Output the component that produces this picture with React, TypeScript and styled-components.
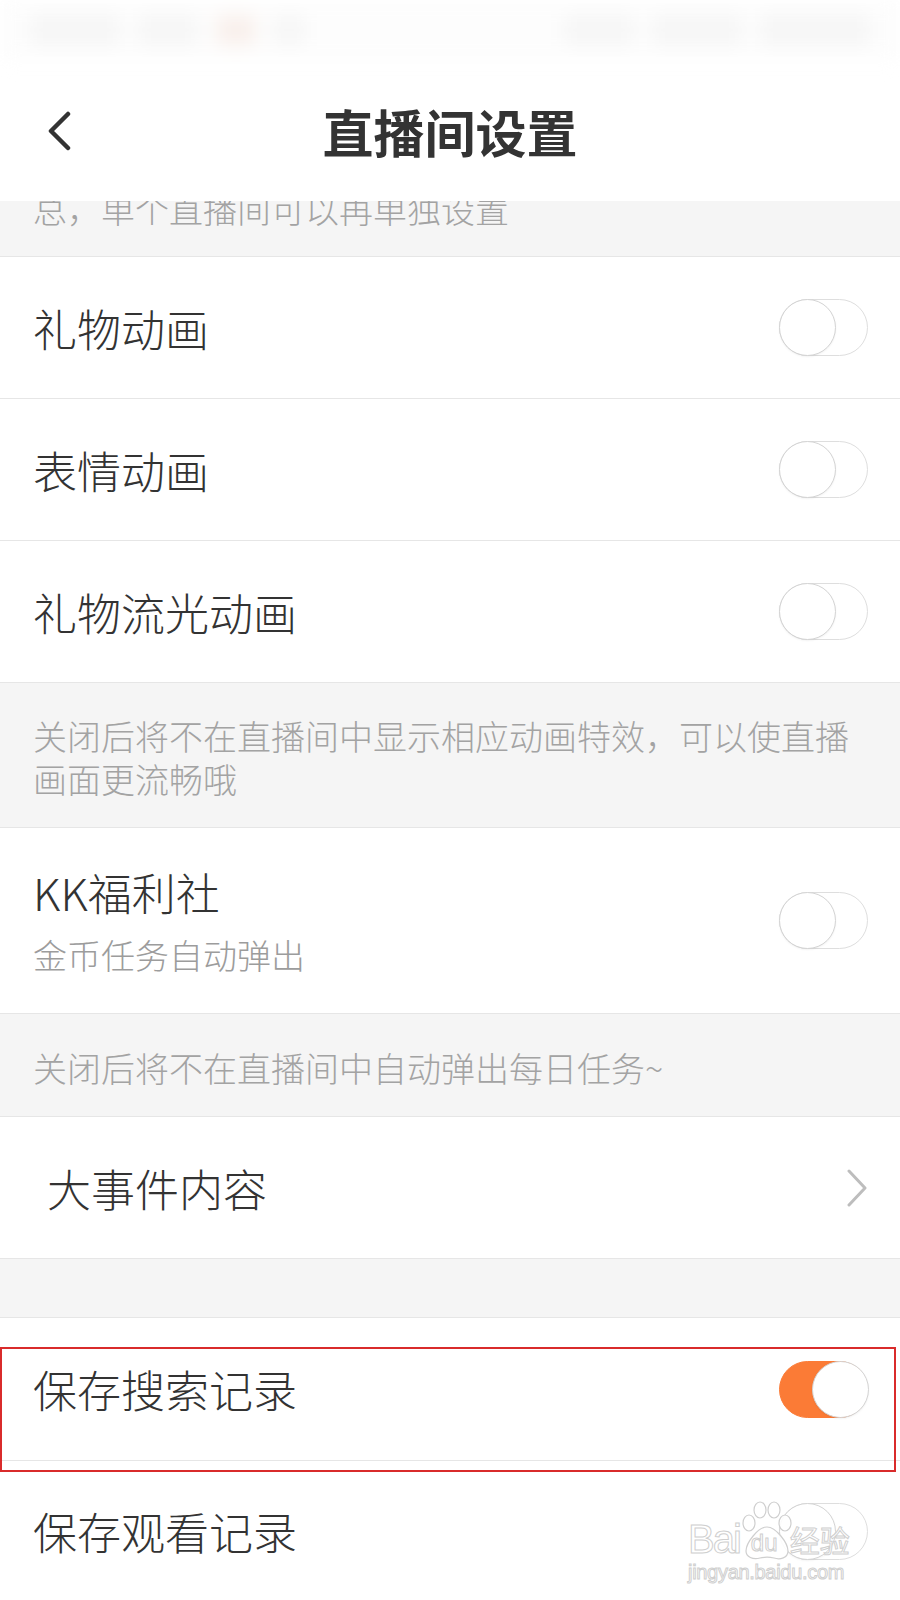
import React from "react";
import styled, { createGlobalStyle } from "styled-components";

const GlobalStyle = createGlobalStyle`
  html, body {
    margin: 0;
    padding: 0;
    background: #ffffff;
  }
  body {
    font-family: "Noto Sans CJK SC", "Noto Sans", sans-serif;
    color: #333333;
  }
`;

const Page = styled.div`
  width: 900px;
  min-height: 1600px;
  overflow: hidden;
  background: #ffffff;
`;

const Header = styled.header`
  height: 201px;
  background: #ffffff;
  display: flex;
  flex-direction: column;
`;

const StatusBar = styled.div`
  height: 60px;
  display: flex;
  align-items: center;
  gap: 18px;
  padding: 0 30px;
  background: #fdfdfd;
  filter: blur(9px);
`;

const Blur = styled.div<{ $w: number; $tint?: string }>`
  width: ${(p) => p.$w}px;
  height: 30px;
  border-radius: 6px;
  background: ${(p) => p.$tint || "#f6f6f6"};
`;

const StatusGap = styled.div`
  flex: 1;
`;

const NavBar = styled.div`
  flex: 1;
  display: grid;
  grid-template-columns: 1fr auto 1fr;
  align-items: center;
  padding: 0 46px;
`;

const BackButton = styled.div`
  width: 26px;
  height: 40px;
  display: flex;
  align-items: center;
`;

const Title = styled.h1`
  margin: 0;
  font-size: 51px;
  font-weight: 700;
  line-height: 60px;
  color: #333333;
`;

const ScrolledNote = styled.div`
  height: 56px;
  box-sizing: border-box;
  overflow: hidden;
  background: #f5f5f5;
  border-bottom: 1px solid #e6e6e6;
  padding: 0 33px;
`;

const ClippedText = styled.div`
  margin-top: -14px;
  font-size: 34px;
  font-weight: 300;
  line-height: 43px;
  color: #a3a3a3;
`;

const Row = styled.div<{ $h?: number }>`
  position: relative;
  height: ${(p) => p.$h || 142}px;
  box-sizing: border-box;
  border-bottom: 1px solid #e6e6e6;
  display: flex;
  align-items: center;
  justify-content: space-between;
  padding: 0 32px 0 33px;
  background: #ffffff;
`;

const Label = styled.div<{ $indent?: number }>`
  font-size: 44px;
  font-weight: 300;
  line-height: 60px;
  color: #333333;
  padding-left: ${(p) => p.$indent || 0}px;
`;

const LabelGroup = styled.div`
  display: flex;
  flex-direction: column;
  padding-bottom: 4px;
`;

const SubLabel = styled.div`
  font-size: 34px;
  font-weight: 300;
  line-height: 43px;
  color: #9c9c9c;
  margin-top: 11px;
`;

const Note = styled.div<{ $pt: number; $pb: number }>`
  background: #f5f5f5;
  border-bottom: 1px solid #e6e6e6;
  padding: ${(p) => p.$pt}px 33px ${(p) => p.$pb}px 33px;
  font-size: 34px;
  font-weight: 300;
  line-height: 43px;
  color: #a3a3a3;
`;

const Spacer = styled.div`
  height: 59px;
  box-sizing: border-box;
  background: #f5f5f5;
  border-bottom: 1px solid #e6e6e6;
`;

const Track = styled.div<{ $on?: boolean }>`
  width: 89px;
  height: 57px;
  box-sizing: border-box;
  border-radius: 29px;
  border: 1.5px solid ${(p) => (p.$on ? "#fb7b36" : "#dedede")};
  background: ${(p) => (p.$on ? "#fb7b36" : "#ffffff")};
  display: flex;
  align-items: center;
  justify-content: ${(p) => (p.$on ? "flex-end" : "flex-start")};
`;

const Knob = styled.div`
  width: 57px;
  height: 57px;
  margin: -1.5px;
  box-sizing: border-box;
  border-radius: 50%;
  border: 1.5px solid #d4d4d4;
  background: #ffffff;
  box-shadow: 0 1px 2px rgba(0, 0, 0, 0.05);
`;

const Highlight = styled.div`
  position: absolute;
  left: 0;
  top: 29px;
  width: 896px;
  height: 125px;
  box-sizing: border-box;
  border: 2px solid #d92b2b;
  z-index: 2;
  pointer-events: none;
`;

const Watermark = styled.div`
  position: absolute;
  left: 688px;
  top: 40px;
  display: flex;
  flex-direction: column;
  align-items: flex-start;
  z-index: 3;
  font-family: "Liberation Sans", Arial, sans-serif;
  color: rgba(255, 255, 255, 0.92);
  -webkit-text-stroke: 1px #cfcfcf;
`;

const MarkLine = styled.div`
  display: flex;
  align-items: flex-end;
  height: 60px;
`;

const MarkBig = styled.span`
  font-size: 40px;
  line-height: 44px;
  letter-spacing: -2px;
`;

const MarkCn = styled.span`
  font-family: "Noto Sans CJK SC", sans-serif;
  font-size: 30px;
  line-height: 44px;
  margin-left: -4px;
`;

const PawBox = styled.span`
  position: relative;
  width: 54px;
  height: 60px;
  display: inline-block;
`;

const PawDu = styled.span`
  position: absolute;
  left: 11px;
  bottom: 6px;
  font-size: 24px;
  line-height: 24px;
`;

const MarkSmall = styled.span`
  font-size: 20px;
  line-height: 22px;
  letter-spacing: -0.3px;
`;

const Toggle = ({ on }: { on?: boolean }) => (
  <Track $on={on}>
    <Knob />
  </Track>
);

const Paw = () => (
  <PawBox>
    <svg width="54" height="60" viewBox="0 0 54 60" style={{ position: "absolute", left: 0, top: 0 }}>
      <g fill="rgba(255,255,255,0.9)" stroke="#cfcfcf" strokeWidth="1.2">
        <ellipse cx="9" cy="22" rx="6" ry="8" />
        <ellipse cx="20" cy="9" rx="6" ry="8" />
        <ellipse cx="34" cy="9" rx="6" ry="8" />
        <ellipse cx="45" cy="22" rx="6" ry="8" />
        <path d="M27 26 C36 26 48 42 48 50 C48 57 40 59 34 57 C30 56 24 56 20 57 C13 59 6 56 6 50 C6 42 18 26 27 26 Z" />
      </g>
    </svg>
    <PawDu>du</PawDu>
  </PawBox>
);

const BackIcon = () => (
  <svg width="26" height="40" viewBox="0 0 26 40">
    <polyline points="22,3 5,20 22,37" fill="none" stroke="#333333" strokeWidth="4.5" strokeLinecap="round" strokeLinejoin="round" />
  </svg>
);

const ChevronRight = () => (
  <svg width="22" height="38" viewBox="0 0 22 38">
    <polyline points="3,2 19,19 3,36" fill="none" stroke="#bdbdbd" strokeWidth="3" strokeLinecap="round" strokeLinejoin="round" />
  </svg>
);

export default function App() {
  return (
    <Page>
      <GlobalStyle />
      <Header>
        <StatusBar>
          <Blur $w={90} />
          <Blur $w={60} />
          <Blur $w={40} $tint="#f9f0ec" />
          <Blur $w={30} />
          <StatusGap />
          <Blur $w={70} />
          <Blur $w={90} />
          <Blur $w={110} />
        </StatusBar>
        <NavBar>
          <BackButton>
            <BackIcon />
          </BackButton>
          <Title>直播间设置</Title>
          <div />
        </NavBar>
      </Header>

      <ScrolledNote>
        <ClippedText>总，单个直播间可以再单独设置</ClippedText>
      </ScrolledNote>

      <Row>
        <Label>礼物动画</Label>
        <Toggle />
      </Row>
      <Row>
        <Label>表情动画</Label>
        <Toggle />
      </Row>
      <Row>
        <Label>礼物流光动画</Label>
        <Toggle />
      </Row>

      <Note $pt={31} $pb={27}>关闭后将不在直播间中显示相应动画特效，可以使直播画面更流畅哦</Note>

      <Row $h={186}>
        <LabelGroup>
          <Label>KK福利社</Label>
          <SubLabel>金币任务自动弹出</SubLabel>
        </LabelGroup>
        <Toggle />
      </Row>

      <Note $pt={32} $pb={27}>关闭后将不在直播间中自动弹出每日任务~</Note>

      <Row>
        <Label $indent={14}>大事件内容</Label>
        <ChevronRight />
      </Row>

      <Spacer />

      <Row $h={143}>
        <Label>保存搜索记录</Label>
        <Toggle on />
        <Highlight />
      </Row>
      <Row $h={141}>
        <Label>保存观看记录</Label>
        <Toggle />
        <Watermark>
          <MarkLine>
            <MarkBig>Bai</MarkBig>
            <Paw />
            <MarkCn>经验</MarkCn>
          </MarkLine>
          <MarkSmall>jingyan.baidu.com</MarkSmall>
        </Watermark>
      </Row>
    </Page>
  );
}
